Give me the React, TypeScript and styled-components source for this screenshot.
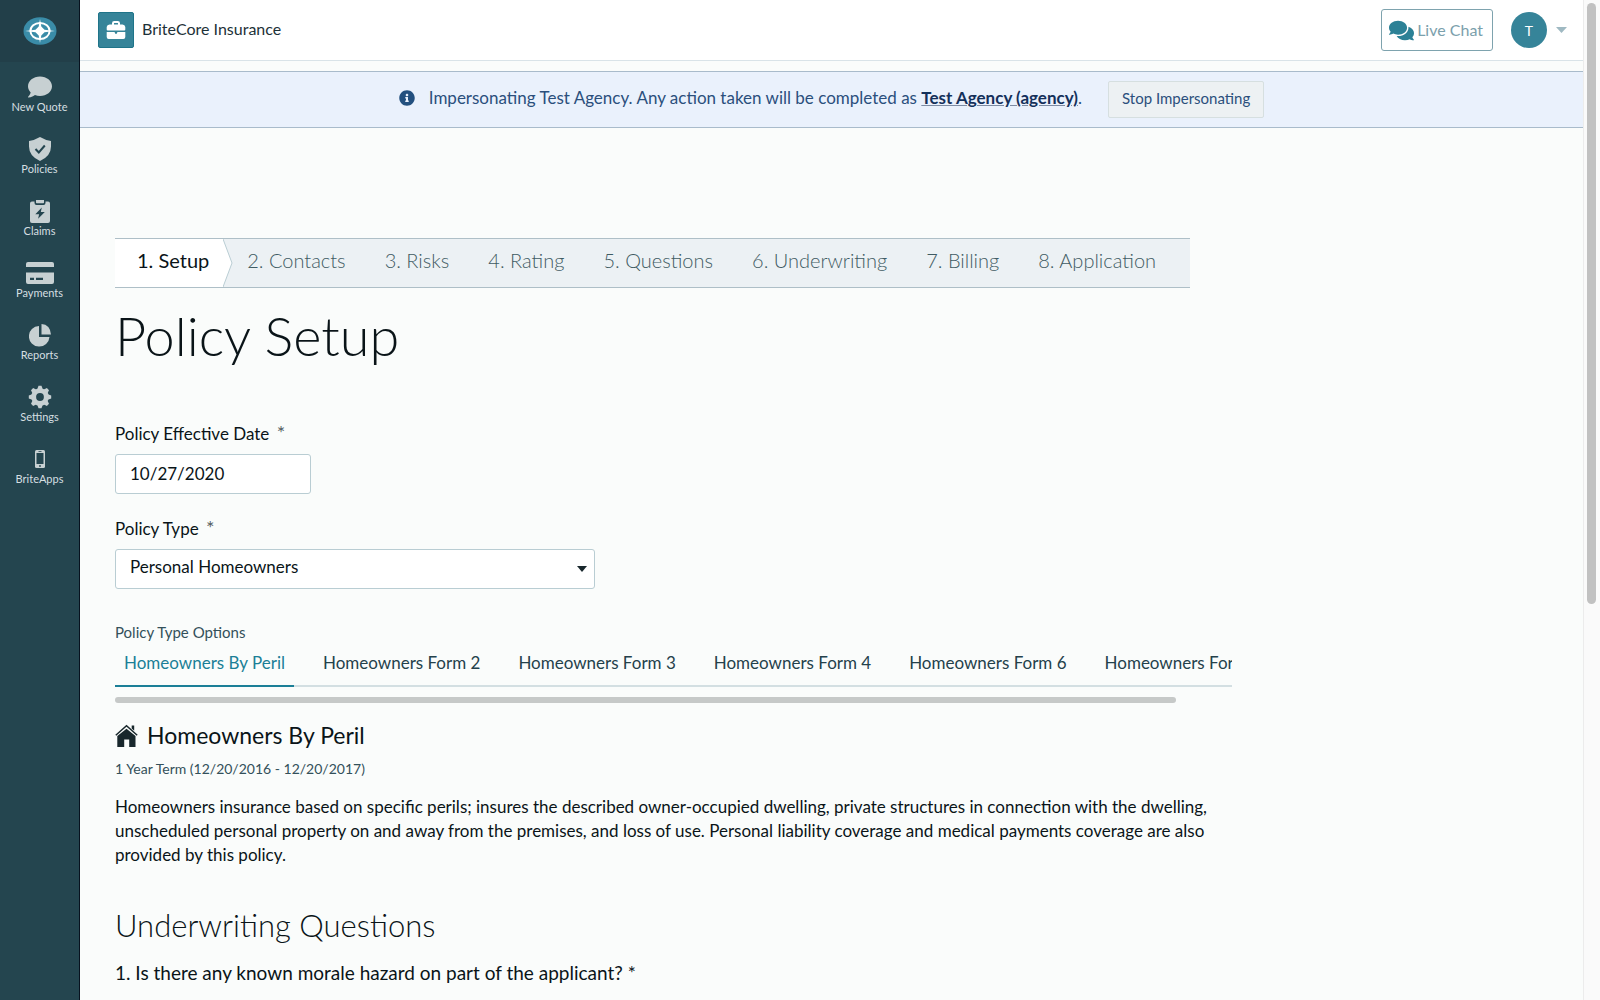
import React from "react";
import styled, { createGlobalStyle, css } from "styled-components";
import { FaComment, FaComments, FaInfoCircle } from "react-icons/fa";

const font = `Lato, "Open Sans", "Noto Sans", sans-serif`;

const color = {
  ink: "#0a1418",
  slate: "#24454f",
  slateDark: "#223f49",
  teal: "#368499",
  link: "#1b7f97",
  line: "#b9cdd3",
  page: "#fafcfb",
  strip: "#ecf1f4",
};

const GlobalStyle = createGlobalStyle`
  *, *::before, *::after { box-sizing: border-box; }
  html, body, #root { height: 100%; }
  body { margin: 0; background: ${color.page}; color: ${color.ink}; font-family: ${font}; font-size: 16px; }
  button, input, select { font-family: inherit; color: inherit; margin: 0; }
  h1, h2, h3, p { margin: 0; }
  a { color: inherit; text-decoration: none; }
`;

const Shell = styled.div`
  display: flex;
  height: 100vh;
  overflow: hidden;
`;

const Sidebar = styled.nav`
  flex: 0 0 80px;
  background: ${color.slate};
  border-right: 1px solid #07121f;
`;

const Brand = styled.a`
  display: flex;
  align-items: center;
  justify-content: center;
  height: 62px;
  background: ${color.slateDark};
`;

const NavList = styled.ul`
  list-style: none;
  margin: 0;
  padding: 13px 0 0;
  display: grid;
  gap: 22px;
`;

const NavLink = styled.a`
  display: flex;
  flex-direction: column;
  align-items: center;
  font-size: 11px;
  line-height: 16px;
  color: #d5dfe1;
`;

const NavIcon = styled.span`
  display: flex;
  align-items: center;
  justify-content: center;
  height: 24px;
  color: #c7d0d2;
`;

const Main = styled.div`
  flex: 1 1 0;
  min-width: 0;
`;

const Header = styled.header`
  display: flex;
  align-items: center;
  height: 61px;
  padding: 0 16px 0 18px;
  background: #fff;
  border-bottom: 1px solid #d9e3e8;
`;

const Badge = styled.span`
  display: flex;
  align-items: center;
  justify-content: center;
  width: 36px;
  height: 36px;
  border: 1px solid #1f7489;
  border-radius: 2px;
  background: ${color.teal};
`;

const Company = styled.span`
  margin-left: 8px;
  padding-bottom: 2px;
  font-size: 16px;
  line-height: 24px;
  color: #1d3138;
`;

const ChatButton = styled.button`
  display: flex;
  align-items: center;
  gap: 3px;
  height: 42px;
  margin-left: auto;
  padding: 0 9px 0 7px;
  border: 1px solid #7ea3ae;
  border-radius: 3px;
  background: #fff;
  font-size: 16px;
  && { color: #7ba0ac; }
  svg { color: #2c8196; }
  span { padding-bottom: 2px; }
`;

const AccountButton = styled.button`
  display: flex;
  align-items: center;
  gap: 9px;
  margin-left: 18px;
  padding: 0;
  border: 0;
  background: none;
`;

const Avatar = styled.span`
  display: flex;
  align-items: center;
  justify-content: center;
  width: 36px;
  height: 36px;
  border-radius: 50%;
  background: ${color.teal};
  color: #fff;
  font-size: 14px;
`;

const Banner = styled.div`
  display: flex;
  align-items: center;
  justify-content: center;
  height: 57px;
  margin-top: 10px;
  background: #eaf1fc;
  border: solid #a9bbcb;
  border-width: 1px 0;
  color: #2b4f7c;
  font-size: 17px;
  svg { color: #23507f; margin: 0 14px 4px 0; }
`;

const BannerText = styled.span`
  padding-bottom: 4px;
`;

const BannerLink = styled.a`
  color: #14305a;
  font-weight: 700;
  text-decoration: underline #7d8ba3;
`;

const StopButton = styled.button`
  height: 37px;
  margin-left: 26px;
  padding: 0 13px 3px;
  border: 1px solid #d6dfe0;
  border-radius: 2px;
  background: #edf1f3;
  font-size: 15px;
`;

const Content = styled.main`
  width: 1152px;
  max-width: 100%;
  padding: 110px 0 0 35px;
`;

const Steps = styled.ol`
  display: flex;
  list-style: none;
  height: 50px;
  margin: 0 42px 0 0;
  padding: 0;
  border: solid #aebfc7;
  border-width: 1px 0;
  background: ${color.strip};
`;

const Step = styled.li<{ $current?: boolean }>`
  display: flex;
  align-items: center;
  padding: 0 19px 6px 20px;
  font-size: 20px;
  font-weight: 300;
  white-space: nowrap;
  color: #3f5b63;
  ${(p) =>
    p.$current &&
    css`
      padding-left: 22px;
      padding-right: 14px;
      background: #fff;
      color: ${color.ink};
      font-weight: 400;
    `}
`;

const Chevron = styled.svg`
  display: block;
  flex: none;
  margin-right: -6px;
`;

const Title = styled.h1`
  margin-top: 16px;
  font-size: 54px;
  line-height: 64px;
  font-weight: 300;
`;

const Field = styled.div<{ $gap: number }>`
  margin-top: ${(p) => p.$gap}px;
`;

const Label = styled.label`
  display: block;
  margin-bottom: 8px;
  font-size: 17px;
  line-height: 24px;
  span { margin-left: 3px; font-size: 20px; line-height: 1; color: #555f63; }
`;

const controlStyle = css`
  display: block;
  height: 40px;
  border: 1px solid ${color.line};
  border-radius: 3px;
  background: #fff;
  font-size: 17px;
`;

const DateInput = styled.input`
  ${controlStyle}
  width: 196px;
  padding: 0 14px 2px;
`;

const SelectBox = styled.div`
  display: grid;
  align-items: center;
  width: 480px;
  > * { grid-area: 1 / 1; }
  > svg { justify-self: end; margin-right: 8px; pointer-events: none; }
`;

const Select = styled.select`
  ${controlStyle}
  appearance: none;
  width: 100%;
  padding: 0 28px 6px 14px;
`;

const Caption = styled.p`
  margin-top: 32px;
  font-size: 15px;
  line-height: 22px;
  color: #33505a;
`;

const Tabs = styled.div`
  display: flex;
  overflow: hidden;
  box-shadow: inset 0 -2px 0 #d3dfe2;
`;

const Tab = styled.button<{ $active?: boolean }>`
  flex: none;
  height: 44px;
  margin-right: 20px;
  padding: 0 9px 4px;
  border: 0;
  border-bottom: 2px solid ${(p) => (p.$active ? color.link : "transparent")};
  background: none;
  font-size: 17px;
  && { color: ${(p) => (p.$active ? color.link : "#24414b")}; }
`;

const ScrollTrack = styled.div`
  height: 6px;
  margin-top: 10px;
`;

const ScrollThumb = styled.div`
  width: 95%;
  height: 100%;
  border-radius: 3px;
  background: #c6c9c8;
`;

const PolicyName = styled.h2`
  display: flex;
  align-items: center;
  gap: 9px;
  margin-top: 17px;
  font-size: 23px;
  line-height: 30px;
  font-weight: 400;
`;

const Term = styled.p`
  margin-top: 8px;
  font-size: 14px;
  line-height: 22px;
  color: #33505a;
`;

const Description = styled.p`
  margin-top: 15px;
  font-size: 17px;
  line-height: 24px;
`;

const SectionTitle = styled.h2`
  margin-top: 38px;
  font-size: 31px;
  line-height: 40px;
  font-weight: 300;
`;

const Question = styled.p`
  margin-top: 16px;
  font-size: 19px;
  line-height: 24px;
  white-space: nowrap;
`;

const PageScroll = styled.div`
  flex: 0 0 17px;
  padding: 3px 4px 3px 3px;
  border-left: 1px solid #ececec;
  background: #fafafa;
`;

const PageThumb = styled.div`
  width: 9px;
  height: 60.5%;
  border-radius: 5px;
  background: #c1c1c1;
`;

const Compass = () => (
  <svg width="34" height="28" viewBox="0 0 34 28" aria-hidden="true">
    <ellipse cx="17" cy="14" rx="16.5" ry="13.7" fill="#3a8ca8" />
    <ellipse cx="17" cy="14" rx="9.6" ry="8" fill="none" stroke="#fff" strokeWidth="2" />
    <path d="M17 2l1.300 7.500L21.500 12.700l10.500 1.300-10.500 1.300-3.200 3.200L17 26l-1.300-7.500-3.200-3.200L2 14l10.500-1.300 3.200-3.200z" fill="#fff" />
  </svg>
);

const Briefcase = () => (
  <svg width="20" height="20" viewBox="0 0 20 20" fill="#fff" aria-hidden="true">
    <path
      fillRule="evenodd"
      d="M6 4.500V3.200Q6 1 8.200 1h3.600Q14 1 14 3.200v1.300h2.500Q19 4.500 19.300 7v2.500q0 1-1 1H1.700q-1 0-1-1V7Q1 4.500 3.500 4.500zm2 0h4V3.300Q12 3 11.700 3H8.300Q8 3 8 3.300z"
    />
    <path d="M.7 12H8.600q.3 2 1.400 2t1.400-2h7.900v5q0 2-2 2H2.700q-2 0-2-2z" />
  </svg>
);

const Shield = () => (
  <svg width="24" height="24" viewBox="0 0 24 24" aria-hidden="true">
    <path d="M12 0q5 3 11 4v5.500Q23 19 12 24 1 19 1 9.500V4Q7 3 12 0z" fill="currentColor" />
    <path d="M7.500 12l3.300 3.500 6-7" fill="none" stroke={color.slate} strokeWidth="2" />
  </svg>
);

const Claim = () => (
  <svg width="20" height="23" viewBox="0 0 20 23" aria-hidden="true">
    <path d="M2 1.500h2.500V3q0 2 2 2h7q2 0 2-2V1.500H18q2 0 2 2V21q0 2-2 2H2q-2 0-2-2V3.500q0-2 2-2z" fill="currentColor" />
    <path d="M6 0h8v2.500q0 .7-.7.7H6.700Q6 3.200 6 2.500z" fill="currentColor" />
    <path d="M11.800 7.500L5.300 14.200h3.800l-1 4.600 6.700-6.800h-4z" fill={color.slate} />
  </svg>
);

const Card = () => (
  <svg width="28" height="22" viewBox="0 0 28 22" fill="currentColor" aria-hidden="true">
    <path d="M2 0h24q2 0 2 2v3H0V2q0-2 2-2z" />
    <path fillRule="evenodd" d="M0 10.500h28V20q0 2-2 2H2q-2 0-2-2zM4 15.700V18h4v-2.300zm6 0V18h7v-2.300z" />
  </svg>
);

const Pie = () => (
  <svg width="22" height="23" viewBox="0 0 22 23" fill="currentColor" aria-hidden="true">
    <path d="M10 2v11h10.500A10.300 10.300 0 1 1 10 2z" />
    <path d="M12.500 0Q21 .5 22 10.500h-9.500z" />
  </svg>
);

const Gear = () => (
  <svg width="24" height="24" viewBox="0 0 24 24" aria-hidden="true">
    <g fill="currentColor">
      <circle cx="12" cy="12" r="8.700" />
      {[0, 45, 90, 135].map((a) => (
        <path key={a} transform={`rotate(${a} 12 12)`} d="M10.500.8h3l1.700 4.700v13l-1.700 4.700h-3l-1.700-4.700v-13z" />
      ))}
    </g>
    <circle cx="12" cy="12" r="3.900" fill={color.slate} />
  </svg>
);

const Phone = () => (
  <svg width="10" height="18" viewBox="0 0 10 18" aria-hidden="true">
    <rect width="10" height="18" rx="1.500" fill="currentColor" />
    <rect x="1.500" y="3" width="7" height="11" fill={color.slate} />
    <circle cx="5" cy="16" r=".9" fill={color.slate} />
    <path d="M3.500 1.500h3" stroke={color.slate} strokeWidth=".8" />
  </svg>
);

const House = () => (
  <svg width="23" height="23" viewBox="0 0 23 23" fill="#18272c" aria-hidden="true">
    <path d="M11.500 4.800L20.500 12v11h-6.300v-7.500H9.200V23H2.300V12z" />
    <path d="M.8 11.200L11.500 1.800l10.700 9.400" fill="none" stroke="#18272c" strokeWidth="1.500" />
    <path d="M16.700 1.500h2.500v5.300l-2.500-2.200z" />
  </svg>
);

const Caret = ({ fill, width }: { fill: string; width: number }) => (
  <svg width={width} height="6" viewBox="0 0 10 6" preserveAspectRatio="none" aria-hidden="true">
    <path d="M0 0h10L5 6z" fill={fill} />
  </svg>
);

const navItems = [
  { label: "New Quote", icon: <FaComment size={24} /> },
  { label: "Policies", icon: <Shield /> },
  { label: "Claims", icon: <Claim /> },
  { label: "Payments", icon: <Card /> },
  { label: "Reports", icon: <Pie /> },
  { label: "Settings", icon: <Gear /> },
  { label: "BriteApps", icon: <Phone /> },
];

const laterSteps = [
  "2. Contacts",
  "3. Risks",
  "4. Rating",
  "5. Questions",
  "6. Underwriting",
  "7. Billing",
  "8. Application",
];

const policyForms = [
  "Homeowners By Peril",
  "Homeowners Form 2",
  "Homeowners Form 3",
  "Homeowners Form 4",
  "Homeowners Form 6",
  "Homeowners Form 8",
];

export default function App() {
  return (
    <>
      <GlobalStyle />
      <Shell>
        <Sidebar>
          <Brand href="#" aria-label="Home">
            <Compass />
          </Brand>
          <NavList>
            {navItems.map((item) => (
              <li key={item.label}>
                <NavLink href="#">
                  <NavIcon>{item.icon}</NavIcon>
                  {item.label}
                </NavLink>
              </li>
            ))}
          </NavList>
        </Sidebar>
        <Main>
          <Header>
            <Badge>
              <Briefcase />
            </Badge>
            <Company>BriteCore Insurance</Company>
            <ChatButton type="button">
              <FaComments size={25} />
              <span>Live Chat</span>
            </ChatButton>
            <AccountButton type="button" aria-label="Account">
              <Avatar>T</Avatar>
              <Caret fill="#9fb9c2" width={11} />
            </AccountButton>
          </Header>
          <Banner>
            <FaInfoCircle size={16} />
            <BannerText>
              Impersonating Test Agency. Any action taken will be completed as{" "}
              <BannerLink href="#">Test Agency (agency)</BannerLink>.
            </BannerText>
            <StopButton type="button">Stop Impersonating</StopButton>
          </Banner>
          <Content>
            <Steps>
              <Step $current>1. Setup</Step>
              <Chevron width="10" height="48" viewBox="0 0 10 48" aria-hidden="true">
                <path d="M0 0L9 24 0 48z" fill="#fff" />
                <path d="M0 0L9 24 0 48" fill="none" stroke="#b9cdd3" />
              </Chevron>
              {laterSteps.map((step) => (
                <Step key={step}>{step}</Step>
              ))}
            </Steps>
            <Title>Policy Setup</Title>
            <Field $gap={54}>
              <Label htmlFor="effective-date">
                Policy Effective Date <span>*</span>
              </Label>
              <DateInput id="effective-date" type="text" defaultValue="10/27/2020" />
            </Field>
            <Field $gap={23}>
              <Label htmlFor="policy-type">
                Policy Type <span>*</span>
              </Label>
              <SelectBox>
                <Select id="policy-type" defaultValue="home">
                  <option value="home">Personal Homeowners</option>
                </Select>
                <Caret fill="#18272c" width={10} />
              </SelectBox>
            </Field>
            <Caption>Policy Type Options</Caption>
            <Tabs role="tablist">
              {policyForms.map((form, i) => (
                <Tab key={form} type="button" role="tab" aria-selected={i === 0} $active={i === 0}>
                  {form}
                </Tab>
              ))}
            </Tabs>
            <ScrollTrack>
              <ScrollThumb />
            </ScrollTrack>
            <PolicyName>
              <House />
              Homeowners By Peril
            </PolicyName>
            <Term>1 Year Term (12/20/2016 - 12/20/2017)</Term>
            <Description>
              Homeowners insurance based on specific perils; insures the described owner-occupied dwelling,
              private structures in connection with the dwelling, unscheduled personal property on and away
              from the premises, and loss of use. Personal liability coverage and medical payments coverage
              are also provided by this policy.
            </Description>
            <SectionTitle>Underwriting Questions</SectionTitle>
            <Question>1. Is there any known morale hazard on part of the applicant? *</Question>
          </Content>
        </Main>
        <PageScroll>
          <PageThumb />
        </PageScroll>
      </Shell>
    </>
  );
}
